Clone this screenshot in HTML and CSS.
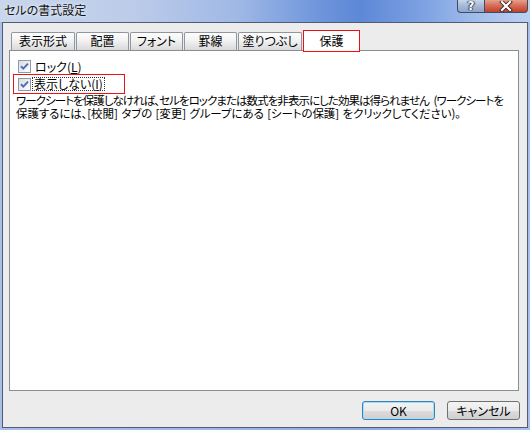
FILE: index.html
```html
<!DOCTYPE html>
<html lang="ja">
<head>
<meta charset="utf-8">
<link rel="stylesheet" href="styles.css">
</head>
<body>
<div class="window">
  <div class="titlebar">
    <span class="title">セルの書式設定</span>
    <div class="caption-buttons">
      <span class="cbtn help">?</span>
      <span class="cbtn close">
        <svg width="14" height="11" viewBox="0 0 14 11">
          <path d="M3 1 L11 9 M11 1 L3 9" stroke="#3a2a28" stroke-width="4" stroke-linecap="square"/>
          <path d="M3 1 L11 9 M11 1 L3 9" stroke="#ffffff" stroke-width="2.2" stroke-linecap="square"/>
        </svg>
      </span>
    </div>
  </div>
  <div class="client">
    <div class="tabs">
      <div class="tab w64">表示形式</div>
      <div class="tab w53">配置</div>
      <div class="tab w53">フォント</div>
      <div class="tab w53">罫線</div>
      <div class="tab w64">塗りつぶし</div>
      <div class="tab active">保護</div>
    </div>
    <div class="panel">
      <div class="check-row">
        <span class="box">
          <svg width="13" height="13" viewBox="0 0 13 13">
            <path d="M3 6.2 L5.3 8.6 L10 3.6" fill="none" stroke="#4a6fc0" stroke-width="2"/>
          </svg>
        </span>
        <span class="label">ロック(<u>L</u>)</span>
      </div>
      <div class="check-row marked">
        <span class="box">
          <svg width="13" height="13" viewBox="0 0 13 13">
            <path d="M3 6.2 L5.3 8.6 L10 3.6" fill="none" stroke="#4a6fc0" stroke-width="2"/>
          </svg>
        </span>
        <span class="label focus">表示しない(<u>I</u>)</span>
      </div>
      <p class="desc"><span class="line1">ワークシートを保護しなければ、セルをロックまたは数式を非表示にした効果は得られません (ワークシートを</span><span class="line2">保護するには、[校閲] タブの [変更] グループにある [シートの保護] をクリックしてください)。</span></p>
    </div>
    <div class="buttons">
      <button class="btn default">OK</button>
      <button class="btn">キャンセル</button>
    </div>
  </div>
</div>
</body>
</html>
```

FILE: styles.css
```css
html, body {
  margin: 0;
  padding: 0;
}
body {
  width: 530px;
  height: 430px;
  overflow: hidden;
  font-family: "Noto Sans CJK JP", "Noto Sans", sans-serif;
  font-size: 12px;
  color: #000;
}
.window {
  width: 530px;
  height: 430px;
  box-sizing: border-box;
  padding: 0 2px 2px 2px;
  display: flex;
  flex-direction: column;
  background: linear-gradient(to right, #a9bfe8 0%, #9fb8e6 40%, #8eaae2 70%, #a6bfec 100%);
}
.titlebar {
  height: 22px;
  margin: 0 -2px;
  display: flex;
  align-items: flex-start;
  background: linear-gradient(to right, #c9d6ec 0%, #bccce9 25%, #9fb8e6 45%, #6f96dc 60%, #5d88d7 68%, #7ea2e2 80%, #a8c2ee 92%, #bcd0f1 100%);
}
.title {
  padding: 3px 0 0 4px;
  line-height: 14px;
  font-size: 12px;
  color: #111;
  text-shadow: 0 0 4px #e8eef8, 0 0 2px #e8eef8;
  font-feature-settings: "palt";
}
.caption-buttons {
  margin-left: auto;
  margin-right: 2px;
  display: flex;
  height: 14px;
}
.cbtn {
  height: 13px;
  box-sizing: border-box;
  border: 1px solid #3f4c66;
  border-top: none;
  display: flex;
  align-items: center;
  justify-content: center;
}
.help {
  width: 27px;
  border-radius: 0 0 0 4px;
  border-right: none;
  background: linear-gradient(#c9d6ea, #a6b8d6 50%, #8fa4c8);
  color: #fff;
  font-family: "DejaVu Sans", sans-serif;
  font-weight: bold;
  font-size: 12px;
  line-height: 12px;
  text-shadow: 0 0 1px #2a3550, 1px 0 1px #2a3550, -1px 0 1px #2a3550;
}
.close {
  width: 44px;
  border-radius: 0 0 4px 0;
  background: linear-gradient(#e6a08c, #d46a52 50%, #c0402a);
}
.client {
  flex: 1;
  border: 1px solid #515c70;
  background: #ececec;
  padding: 7px 8px 0 6px;
  display: flex;
  flex-direction: column;
}
.tabs {
  display: flex;
  align-items: flex-end;
  gap: 1px;
  height: 20px;
  margin-left: 2px;
}
.tab {
  height: 18px;
  box-sizing: border-box;
  border: 1px solid #8f969e;
  border-bottom: none;
  border-radius: 2px 2px 0 0;
  background: linear-gradient(#fdfdfd, #f2f2f2 45%, #d9d9d9 100%);
  text-align: center;
  line-height: 16px;
  font-feature-settings: "palt";
}
.w64 { width: 64px; }
.w53 { width: 53px; }
.tab.active {
  width: 57px;
  height: 22px;
  margin-bottom: -2px;
  border: 1px solid #ee1111;
  border-radius: 0;
  background: #fff;
  line-height: 19px;
  position: relative;
  z-index: 1;
}
.panel {
  width: 510px;
  height: 341px;
  box-sizing: border-box;
  border: 1px solid #8a8d96;
  background: #fff;
  padding: 9px 0 0 6px;
  overflow: hidden;
}
.check-row {
  display: flex;
  align-items: center;
  height: 13px;
  margin-left: 2px;
}
.check-row.marked {
  margin: 1px 0 0 -3px;
  height: 20px;
  width: 112px;
  box-sizing: border-box;
  border: 1px solid #ee1111;
  padding: 0 0 0 4px;
}
.box {
  width: 13px;
  height: 13px;
  box-sizing: border-box;
  border: 1px solid #8e9aa8;
  background: linear-gradient(135deg, #dcdcdc, #f4f4f4 70%, #fbfbfb);
  display: flex;
}
.box svg {
  margin: -1px;
}
.label {
  margin-left: 4px;
  line-height: 12px;
  font-feature-settings: "palt";
}
.label.focus {
  margin-left: 2px;
  padding: 0 1px;
  outline: 1px dotted #333;
}
.desc {
  margin: 0;
  font-size: 11.5px;
  line-height: 13px;
  white-space: nowrap;
  font-feature-settings: "palt";
}
.line1, .line2 {
  display: block;
}
.line1 {
  letter-spacing: -0.95px;
  word-spacing: 3px;
}
.line2 {
  letter-spacing: -0.1px;
  word-spacing: 1px;
}
.buttons {
  display: flex;
  justify-content: flex-end;
  gap: 12px;
  margin-top: 10px;
  width: 511px;
}
.btn {
  font-family: inherit;
  font-size: 12px;
  font-feature-settings: "palt";
  height: 19px;
  padding: 0;
  box-sizing: border-box;
  border: 1px solid #707070;
  border-radius: 3px;
  background: linear-gradient(#f3f3f3, #ebebeb 50%, #dddddd 51%, #cfcfcf);
  color: #000;
  line-height: 15px;
  width: 73px;
}
.btn.default {
  border-color: #3c7fb1;
  box-shadow: inset 0 0 0 1px #9ee0fc;
}
```
